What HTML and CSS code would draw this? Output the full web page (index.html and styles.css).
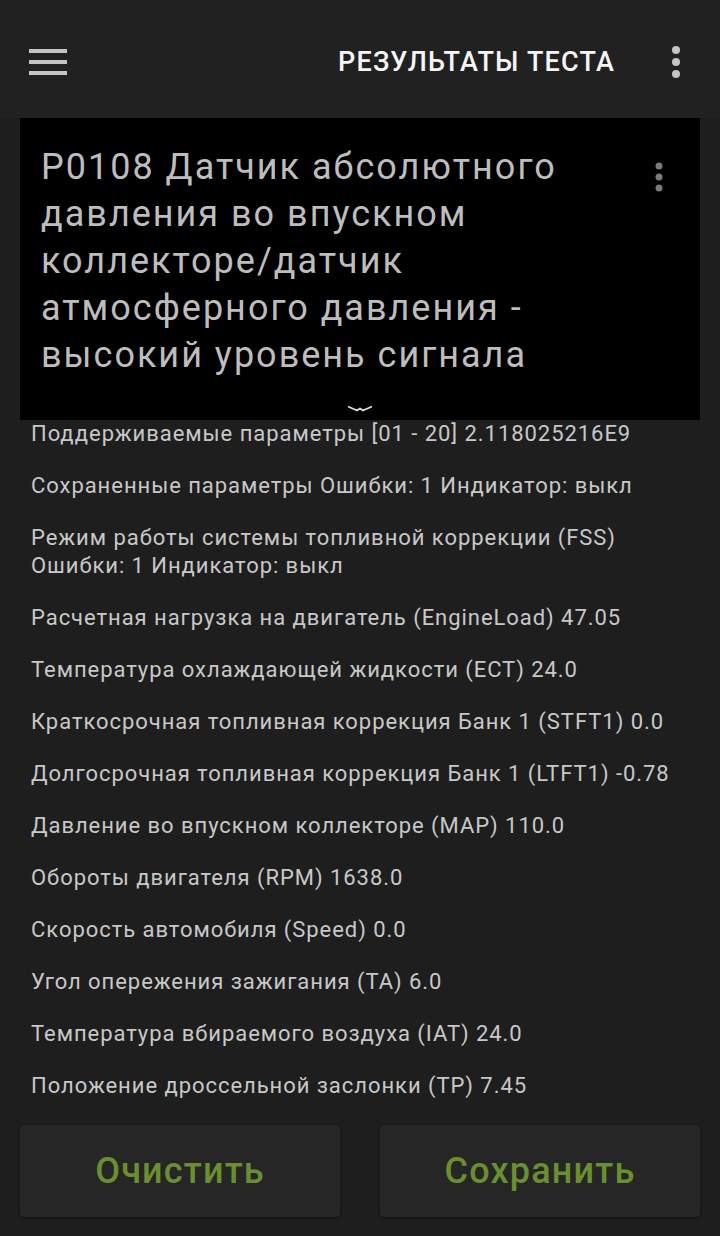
FILE: index.html
```html
<!DOCTYPE html>
<html lang="ru">
<head>
<meta charset="utf-8">
<title>Результаты теста</title>
<link rel="stylesheet" href="styles.css">
</head>
<body>
<header class="appbar">
  <button class="icon-btn menu" aria-label="Меню">
    <svg width="38" height="26" viewBox="0 0 38 26"><rect x="0" y="0" width="38" height="4" fill="#c4c4c4"/><rect x="0" y="11" width="38" height="4" fill="#c4c4c4"/><rect x="0" y="22" width="38" height="4" fill="#c4c4c4"/></svg>
  </button>
  <h1 class="appbar-title">РЕЗУЛЬТАТЫ ТЕСТА</h1>
  <button class="icon-btn kebab" aria-label="Ещё">
    <svg width="10" height="34" viewBox="0 0 10 34"><circle cx="5" cy="5" r="4" fill="#c4c4c4"/><circle cx="5" cy="17" r="4" fill="#c4c4c4"/><circle cx="5" cy="29" r="4" fill="#c4c4c4"/></svg>
  </button>
</header>

<section class="code-panel">
  <div class="code-head">
    <h2 class="code-title">P0108 Датчик абсолютного<br>давления во впускном<br>коллекторе/датчик<br>атмосферного давления -<br>высокий уровень сигнала</h2>
    <span class="code-kebab">
      <svg width="8" height="30" viewBox="0 0 8 30"><circle cx="4" cy="4" r="3.5" fill="#7a7a7a"/><circle cx="4" cy="15" r="3.5" fill="#7a7a7a"/><circle cx="4" cy="26" r="3.5" fill="#7a7a7a"/></svg>
    </span>
  </div>
  <div class="chevron">
    <svg width="26" height="8" viewBox="0 0 26 8"><path d="M1 1.5 L10 5.5 L13 3.5 L16 5.5 L25 1.5" fill="none" stroke="#e0e0e0" stroke-width="1.8" stroke-linejoin="round"/></svg>
  </div>
</section>

<ul class="params">
  <li>Поддерживаемые параметры [01 - 20] 2.118025216E9</li>
  <li>Сохраненные параметры Ошибки: 1 Индикатор: выкл</li>
  <li>Режим работы системы топливной коррекции (FSS)<br>Ошибки: 1 Индикатор: выкл</li>
  <li>Расчетная нагрузка на двигатель (EngineLoad) 47.05</li>
  <li>Температура охлаждающей жидкости (ECT) 24.0</li>
  <li>Краткосрочная топливная коррекция Банк 1 (STFT1) 0.0</li>
  <li>Долгосрочная топливная коррекция Банк 1 (LTFT1) -0.78</li>
  <li>Давление во впускном коллекторе (MAP) 110.0</li>
  <li>Обороты двигателя (RPM) 1638.0</li>
  <li>Скорость автомобиля (Speed) 0.0</li>
  <li>Угол опережения зажигания (TA) 6.0</li>
  <li>Температура вбираемого воздуха (IAT) 24.0</li>
  <li>Положение дроссельной заслонки (TP) 7.45</li>
</ul>

<div class="actions">
  <button class="action-btn">Очистить</button>
  <button class="action-btn">Сохранить</button>
</div>
</body>
</html>
```
FILE: styles.css
```css
* { box-sizing: border-box; }
html, body { margin: 0; padding: 0; }
body {
  width: 720px;
  height: 1236px;
  overflow: hidden;
  background: #1e1e1e;
  font-family: Roboto, "Noto Sans", "Liberation Sans", sans-serif;
  color: #c8c8c8;
}
.appbar {
  height: 118px;
  padding: 6px 0 0 29px;
  display: flex;
  align-items: center;
  background: #212121;
}
.icon-btn {
  background: none;
  border: 0;
  padding: 0;
  display: flex;
  align-items: center;
  justify-content: center;
}
.menu { width: 38px; height: 26px; }
.appbar-title {
  margin: 0 0 0 auto;
  font-size: 27px;
  font-weight: 500;
  color: #f5f5f5;
  letter-spacing: 1.2px;
}
.kebab { width: 10px; height: 34px; margin: 0 39px 0 56px; }

.code-panel {
  margin: 0 20px;
  height: 302px;
  background: #000;
  display: flex;
  flex-direction: column;
}
.code-head {
  display: flex;
  align-items: flex-start;
  padding: 26px 0 0 21px;
}
.code-title {
  flex: 1;
  margin: 0;
  font-size: 36px;
  font-weight: 400;
  line-height: 47px;
  letter-spacing: 2px;
  color: #bdbdbd;
}
.code-kebab {
  display: flex;
  width: 8px;
  margin: 18px 37px 0 0;
}
.chevron {
  margin-top: auto;
  display: flex;
  justify-content: center;
  padding-bottom: 7px;
}

.params {
  list-style: none;
  margin: 0;
  padding: 0 31px;
  display: flex;
  flex-direction: column;
  gap: 24px;
  font-size: 22px;
  line-height: 28px;
  letter-spacing: 0.95px;
  color: #c8c8c8;
}
.params li { margin: 0; white-space: nowrap; }

.actions {
  display: grid;
  grid-template-columns: 1fr 1fr;
  gap: 40px;
  padding: 0 20px;
  margin-top: 25px;
}
.action-btn {
  height: 92px;
  border: 0;
  border-radius: 4px;
  background: #262626;
  box-shadow: 0 1px 3px rgba(0,0,0,0.5);
  color: #6a8f2e;
  font-family: Roboto, "Noto Sans", "Liberation Sans", sans-serif;
  font-size: 36px;
  font-weight: 500;
  letter-spacing: 1.2px;
}
```
